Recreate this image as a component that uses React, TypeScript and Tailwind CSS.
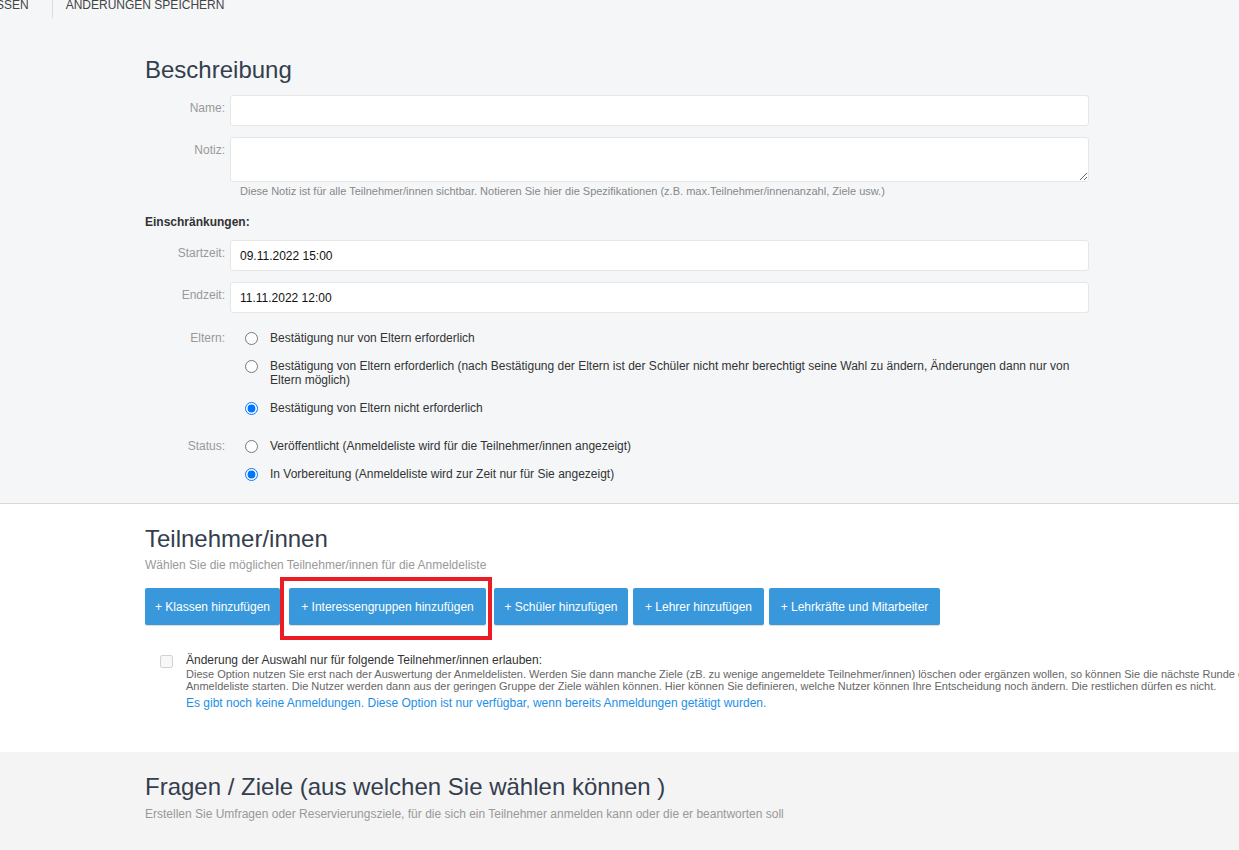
import React from 'react';

const FieldRow = ({ label, children }: { label: string; children: React.ReactNode }) => (
  <div className="flex">
    <div className="w-[80px] shrink-0 pt-[6px] text-right text-[12px] leading-[14px] text-[#999]">{label}</div>
    <div className="ml-[5px] w-[859px]">{children}</div>
  </div>
);

const TextInput = ({ value }: { value?: string }) => (
  <input
    type="text"
    defaultValue={value}
    className="block h-[31px] w-full rounded-[3px] border border-[#e6e6e6] bg-white px-[9px] text-[12px] text-[#111] outline-none"
  />
);

const Radio = ({ name, checked, children }: { name: string; checked?: boolean; children: React.ReactNode }) => (
  <label className="flex items-start gap-[12px] pl-[15px]">
    <input
      type="radio"
      name={name}
      defaultChecked={checked}
      className="m-0 mt-[1px] h-[13px] w-[13px] shrink-0"
    />
    <span className="text-[12px] leading-[14px] text-[#333]">{children}</span>
  </label>
);

const buttons = [
  { text: '+ Klassen hinzufügen', cls: 'w-[135px]' },
  { text: '+ Interessengruppen hinzufügen', cls: 'ml-[9px] w-[197px]', marked: true },
  { text: '+ Schüler hinzufügen', cls: 'ml-[8px] w-[134px]' },
  { text: '+ Lehrer hinzufügen', cls: 'ml-[5px] w-[131px]' },
  { text: '+ Lehrkräfte und Mitarbeiter', cls: 'ml-[5px] w-[171px]' },
];

const App = () => {
  return (
    <div className="min-h-screen w-full overflow-hidden bg-[#f4f4f4] font-['Liberation_Sans',Arial,sans-serif]">
      {/* Beschreibung */}
      <section className="border-b border-[#d9d9d9] bg-[#f5f6f8] pb-[22px]">
        <div className="flex h-[18px] items-start text-[12px] leading-[12px] text-[#444]">
          <span className="-ml-[4px] -mt-[1px]">SSEN</span>
          <span className="ml-[23px] h-[18px] w-px bg-[#dcdcdc]" />
          <span className="-mt-[1px] ml-[13px]">ÄNDERUNGEN SPEICHERN</span>
        </div>

        <div className="pl-[145px]">
          <h2 className="mt-[39px] text-[24px] leading-[26px] text-[#343e4e]">Beschreibung</h2>

          <div className="mt-[12px]">
            <FieldRow label="Name:">
              <TextInput />
            </FieldRow>
          </div>

          <div className="mt-[11px]">
            <FieldRow label="Notiz:">
              <textarea className="block h-[45px] w-full rounded-[3px] border border-[#e6e6e6] bg-white px-[9px] text-[12px] outline-none" />
              <p className="mt-[3px] pl-[10px] text-[11px] leading-[13px] text-[#888]">
                Diese Notiz ist für alle Teilnehmer/innen sichtbar. Notieren Sie hier die Spezifikationen (z.B. max.Teilnehmer/innenanzahl, Ziele usw.)
              </p>
            </FieldRow>
          </div>

          <h4 className="mt-[17px] text-[12px] font-bold leading-[14px] text-[#333]">Einschränkungen:</h4>

          <div className="mt-[11px]">
            <FieldRow label="Startzeit:">
              <TextInput value="09.11.2022 15:00" />
            </FieldRow>
          </div>

          <div className="mt-[11px]">
            <FieldRow label="Endzeit:">
              <TextInput value="11.11.2022 12:00" />
            </FieldRow>
          </div>

          <div className="mt-[18px] flex">
            <div className="w-[80px] shrink-0 text-right text-[12px] leading-[14px] text-[#999]">Eltern:</div>
            <div className="ml-[5px] flex w-[859px] flex-col gap-[14px]">
              <Radio name="eltern">Bestätigung nur von Eltern erforderlich</Radio>
              <Radio name="eltern">
                Bestätigung von Eltern erforderlich (nach Bestätigung der Eltern ist der Schüler nicht mehr berechtigt seine Wahl zu ändern, Änderungen dann nur von Eltern möglich)
              </Radio>
              <Radio name="eltern" checked>Bestätigung von Eltern nicht erforderlich</Radio>
            </div>
          </div>

          <div className="mt-[24px] flex">
            <div className="w-[80px] shrink-0 text-right text-[12px] leading-[14px] text-[#999]">Status:</div>
            <div className="ml-[5px] flex w-[859px] flex-col gap-[14px]">
              <Radio name="status">Veröffentlicht (Anmeldeliste wird für die Teilnehmer/innen angezeigt)</Radio>
              <Radio name="status" checked>In Vorbereitung (Anmeldeliste wird zur Zeit nur für Sie angezeigt)</Radio>
            </div>
          </div>
        </div>
      </section>

      {/* Teilnehmer/innen */}
      <section className="bg-white pb-[42px] pl-[145px]">
        <h2 className="pt-[22px] text-[24px] leading-[26px] text-[#343e4e]">Teilnehmer/innen</h2>
        <p className="mt-[6px] text-[12px] leading-[14px] text-[#999]">Wählen Sie die möglichen Teilnehmer/innen für die Anmeldeliste</p>

        <div className="mt-[16px] flex">
          {buttons.map((b) => (
            <div key={b.text} className={`relative ${b.cls}`}>
              <button className="h-[37px] w-full rounded-[2px] bg-[#3898db] text-center text-[12px] text-white shadow-[0_1px_1px_rgba(0,0,0,0.15)]">
                {b.text}
              </button>
              {b.marked && (
                <div className="pointer-events-none absolute -bottom-[15px] -left-[9px] -right-[6px] -top-[11px] border-[4px] border-[#ed1c24]" />
              )}
            </div>
          ))}
        </div>

        <div className="mt-[28px] flex items-start">
          <input type="checkbox" disabled className="m-0 ml-[15px] mt-[2px] h-[13px] w-[13px] shrink-0" />
          <div className="ml-[13px]">
            <div className="text-[12px] leading-[14px] text-[#333]">Änderung der Auswahl nur für folgende Teilnehmer/innen erlauben:</div>
            <div className="mt-[1px] whitespace-nowrap text-[11px] leading-[12px] text-[#666]">
              Diese Option nutzen Sie erst nach der Auswertung der Anmeldelisten. Werden Sie dann manche Ziele (zB. zu wenige angemeldete Teilnehmer/innen) löschen oder ergänzen wollen, so können Sie die nächste Runde der
              <br />
              Anmeldeliste starten. Die Nutzer werden dann aus der geringen Gruppe der Ziele wählen können. Hier können Sie definieren, welche Nutzer können Ihre Entscheidung noch ändern. Die restlichen dürfen es nicht.
            </div>
            <div className="mt-[4px] text-[12px] leading-[14px] text-[#1e8fe6]">
              Es gibt noch keine Anmeldungen. Diese Option ist nur verfügbar, wenn bereits Anmeldungen getätigt wurden.
            </div>
          </div>
        </div>
      </section>

      {/* Fragen / Ziele */}
      <section className="bg-[#f4f4f4] pb-[40px] pl-[145px]">
        <h2 className="pt-[22px] text-[24px] leading-[26px] text-[#343e4e]">Fragen / Ziele (aus welchen Sie wählen können )</h2>
        <p className="mt-[7px] text-[12px] leading-[14px] text-[#999]">
          Erstellen Sie Umfragen oder Reservierungsziele, für die sich ein Teilnehmer anmelden kann oder die er beantworten soll
        </p>
      </section>
    </div>
  );
};

export default App;
